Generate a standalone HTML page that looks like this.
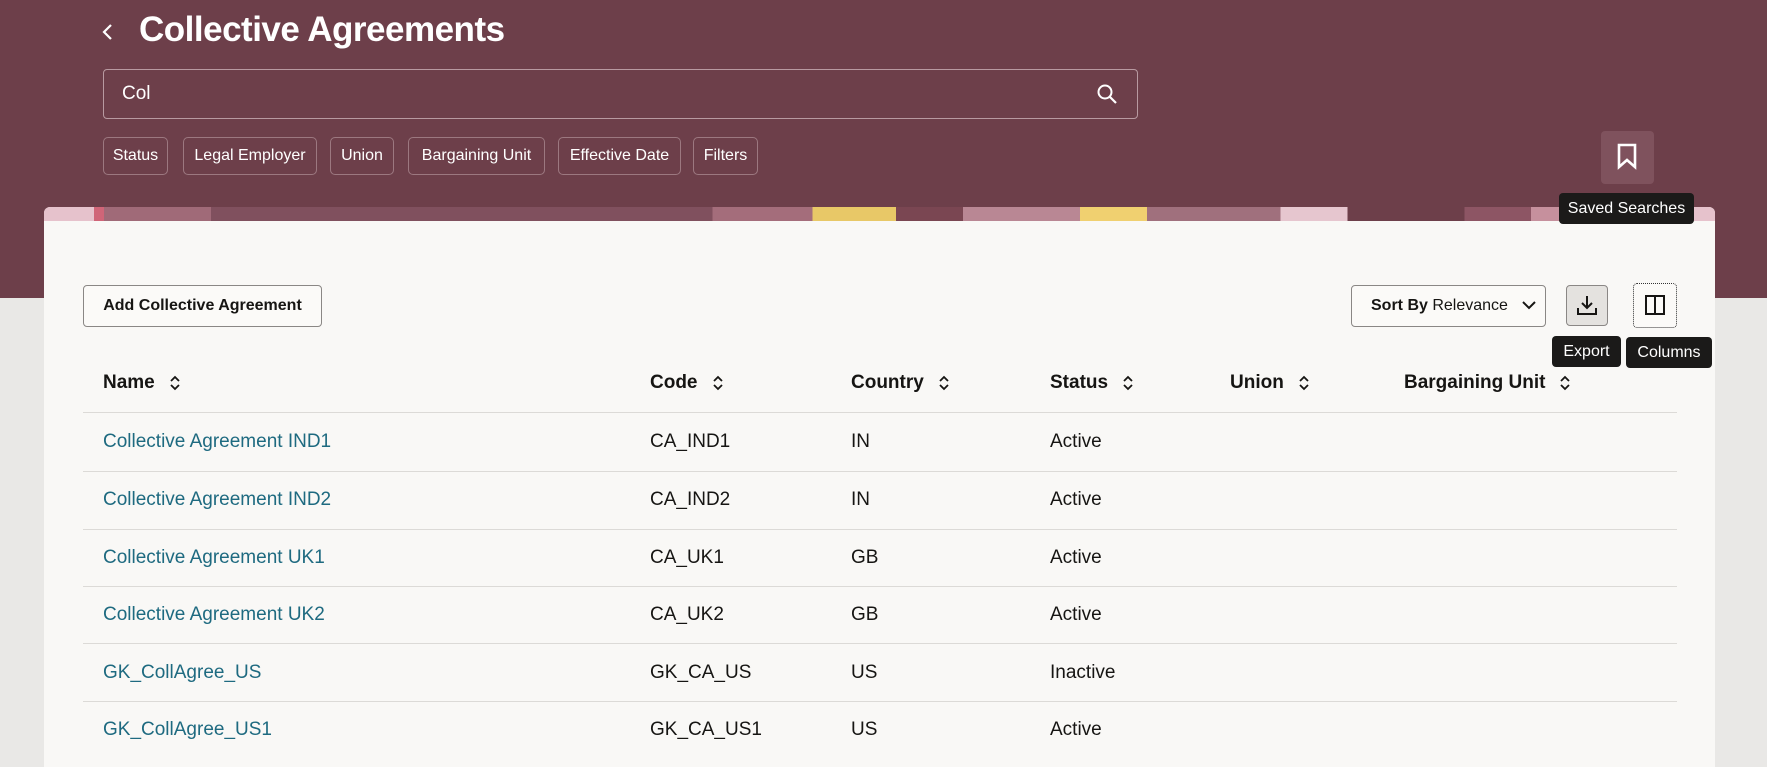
<!DOCTYPE html>
<html><head><meta charset="utf-8"><style>
*{box-sizing:border-box;margin:0;padding:0}
body{width:1767px;height:747px;overflow:hidden;background:#e9e8e6;font-family:"Liberation Sans",sans-serif;position:relative}
.hdr{position:absolute;left:0;top:0;width:1767px;height:298px;background:#6d3f4a}
.abs{position:absolute}
.title{left:139px;top:10px;color:#fff;font-size:35px;font-weight:bold;letter-spacing:-0.5px}
.search{left:103px;top:69px;width:1035px;height:50px;border:1px solid #b89aa1;border-radius:4px;color:#fff;font-size:19px;padding:13px 0 0 18px}
.chip{position:absolute;top:137px;height:38px;border:1px solid #9c7880;border-radius:5px;color:#fff;font-size:16px;line-height:36px;text-align:center}
.tip{position:absolute;background:#1b1a19;color:#fff;font-size:16px;border-radius:4px;text-align:center}
.card{left:44px;top:207px;width:1671px;height:560px;background:#f9f8f6;border-radius:6px 6px 0 0;overflow:hidden}
.decor{position:absolute;left:0;top:0;width:100%;height:14px;background:linear-gradient(90deg,#e6c2cc 0 3%,#d06578 3% 3.6%,#a06a78 3.6% 10%,#80505e 10% 40%,#a46d7b 40% 46%,#e8c867 46% 51%,#7a4652 51% 55%,#b98794 55% 62%,#f0d070 62% 66%,#a0707d 66% 74%,#e6c6cf 74% 78%,#6d3f4a 78% 85%,#8d5564 85% 89%,#c6909d 89% 94%,#e8c867 94% 97%,#e6c2cc 97%)}
.btn{position:absolute;border:1px solid #8a8785;border-radius:4px;background:#fbfaf8;color:#161513;font-size:16px}
.th{position:absolute;top:372px;font-size:19px;font-weight:bold;color:#161513;display:flex;align-items:center}
.th svg{margin-left:14px}
.line{position:absolute;left:83px;width:1594px;height:1px;background:#dcdad7}
.cell{position:absolute;font-size:19px;color:#161513}
.lnk{color:#1e6a80}
</style></head><body>
<div class="hdr"></div>
<svg class="abs" style="left:100px;top:22px" width="16" height="20" viewBox="0 0 16 20"><path d="M11 3L4 10l7 7" fill="none" stroke="#fff" stroke-width="2.2"/></svg>
<div class="abs title">Collective Agreements</div>
<div class="abs search">Col</div>
<svg class="abs" style="left:1096px;top:83px" width="22" height="22" viewBox="0 0 22 22"><circle cx="9" cy="9" r="6.5" fill="none" stroke="#fff" stroke-width="2"/><path d="M14 14l6 6" stroke="#fff" stroke-width="2.2"/></svg>
<div class="chip" style="left:103px;width:65px">Status</div>
<div class="chip" style="left:183px;width:134px">Legal Employer</div>
<div class="chip" style="left:330px;width:64px">Union</div>
<div class="chip" style="left:408px;width:137px">Bargaining Unit</div>
<div class="chip" style="left:558px;width:123px">Effective Date</div>
<div class="chip" style="left:693px;width:65px">Filters</div>
<div class="abs" style="left:1601px;top:131px;width:53px;height:53px;background:#7f525d;border-radius:4px"></div>
<svg class="abs" style="left:1616px;top:143px" width="22" height="28" viewBox="0 0 22 28"><path d="M3 2h16v22l-8-7-8 7z" fill="none" stroke="#fff" stroke-width="2.6"/></svg>
<div class="abs card"><div class="decor"></div></div>
<div class="tip" style="left:1559px;top:193px;width:135px;height:31px;line-height:31px">Saved Searches</div>
<div class="btn" style="left:83px;top:285px;width:239px;height:42px;line-height:40px;text-align:center;font-weight:bold">Add Collective Agreement</div>
<div class="btn" style="left:1351px;top:285px;width:195px;height:42px;line-height:40px;padding-left:19px"><b>Sort By</b> Relevance</div>
<svg class="abs" style="left:1521px;top:299px" width="16" height="12" viewBox="0 0 16 12"><path d="M2 3l6 6 6-6" fill="none" stroke="#161513" stroke-width="2"/></svg>
<div class="btn" style="left:1566px;top:285px;width:42px;height:41px;background:#e4e2df"></div>
<svg class="abs" style="left:1576px;top:294px" width="22" height="22" viewBox="0 0 22 22"><path d="M11 2v12M6 9l5 5 5-5M2 14v6h18v-6" fill="none" stroke="#161513" stroke-width="2"/></svg>
<div class="btn" style="left:1633px;top:283px;width:44px;height:45px;border:1px dotted #333"></div>
<svg class="abs" style="left:1644px;top:294px" width="22" height="22" viewBox="0 0 22 22"><path d="M2 2h18v18H2zM11 2v18" fill="none" stroke="#161513" stroke-width="2"/></svg>
<div class="tip" style="left:1552px;top:336px;width:69px;height:31px;line-height:31px">Export</div>
<div class="tip" style="left:1626px;top:337px;width:86px;height:31px;line-height:31px">Columns</div>
<div class="th" style="left:103px">Name<svg width="12" height="18" viewBox="0 0 12 18"><path d="M2 7l4-4 4 4M2 11l4 4 4-4" fill="none" stroke="#161513" stroke-width="1.8"/></svg></div>
<div class="th" style="left:650px">Code<svg width="12" height="18" viewBox="0 0 12 18"><path d="M2 7l4-4 4 4M2 11l4 4 4-4" fill="none" stroke="#161513" stroke-width="1.8"/></svg></div>
<div class="th" style="left:851px">Country<svg width="12" height="18" viewBox="0 0 12 18"><path d="M2 7l4-4 4 4M2 11l4 4 4-4" fill="none" stroke="#161513" stroke-width="1.8"/></svg></div>
<div class="th" style="left:1050px">Status<svg width="12" height="18" viewBox="0 0 12 18"><path d="M2 7l4-4 4 4M2 11l4 4 4-4" fill="none" stroke="#161513" stroke-width="1.8"/></svg></div>
<div class="th" style="left:1230px">Union<svg width="12" height="18" viewBox="0 0 12 18"><path d="M2 7l4-4 4 4M2 11l4 4 4-4" fill="none" stroke="#161513" stroke-width="1.8"/></svg></div>
<div class="th" style="left:1404px">Bargaining Unit<svg width="12" height="18" viewBox="0 0 12 18"><path d="M2 7l4-4 4 4M2 11l4 4 4-4" fill="none" stroke="#161513" stroke-width="1.8"/></svg></div>
<div class="line" style="top:412px"></div>
<div class="line" style="top:471px"></div>
<div class="line" style="top:529px"></div>
<div class="line" style="top:586px"></div>
<div class="line" style="top:643px"></div>
<div class="line" style="top:701px"></div>
<div class="cell lnk" style="left:103px;top:431px">Collective Agreement IND1</div><div class="cell" style="left:650px;top:431px">CA_IND1</div><div class="cell" style="left:851px;top:431px">IN</div><div class="cell" style="left:1050px;top:431px">Active</div>
<div class="cell lnk" style="left:103px;top:489px">Collective Agreement IND2</div><div class="cell" style="left:650px;top:489px">CA_IND2</div><div class="cell" style="left:851px;top:489px">IN</div><div class="cell" style="left:1050px;top:489px">Active</div>
<div class="cell lnk" style="left:103px;top:547px">Collective Agreement UK1</div><div class="cell" style="left:650px;top:547px">CA_UK1</div><div class="cell" style="left:851px;top:547px">GB</div><div class="cell" style="left:1050px;top:547px">Active</div>
<div class="cell lnk" style="left:103px;top:604px">Collective Agreement UK2</div><div class="cell" style="left:650px;top:604px">CA_UK2</div><div class="cell" style="left:851px;top:604px">GB</div><div class="cell" style="left:1050px;top:604px">Active</div>
<div class="cell lnk" style="left:103px;top:662px">GK_CollAgree_US</div><div class="cell" style="left:650px;top:662px">GK_CA_US</div><div class="cell" style="left:851px;top:662px">US</div><div class="cell" style="left:1050px;top:662px">Inactive</div>
<div class="cell lnk" style="left:103px;top:719px">GK_CollAgree_US1</div><div class="cell" style="left:650px;top:719px">GK_CA_US1</div><div class="cell" style="left:851px;top:719px">US</div><div class="cell" style="left:1050px;top:719px">Active</div>
</body></html>
